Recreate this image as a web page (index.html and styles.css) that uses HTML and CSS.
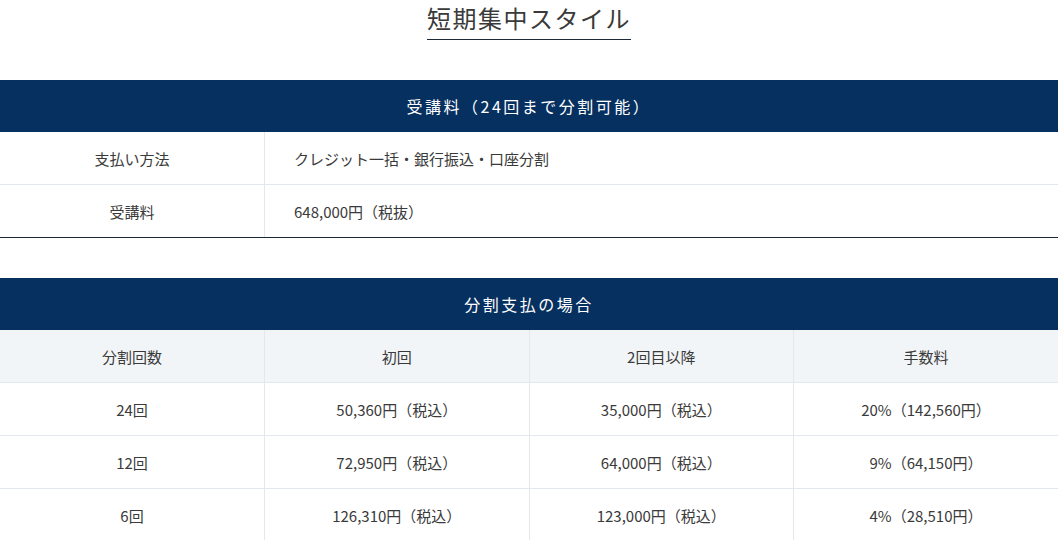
FILE: index.html
```html
<!DOCTYPE html>
<html lang="ja">

<head>
    <meta charset="UTF-8">
    <meta name="viewport" content="width=device-width, initial-scale=1.0">
    <title>短期集中スタイル</title>
    <link rel="stylesheet" href="styles.css">
</head>

<body>

    <div class="plan">
        <div class="plan-title">
            <h2>短期集中スタイル</h2>
        </div>

        <table class="price-table">
            <colgroup>
                <col class="col-label">
                <col>
            </colgroup>
            <thead>
                <tr>
                    <th colspan="2" class="band">受講料（24回まで分割可能）</th>
                </tr>
            </thead>
            <tbody>
                <tr>
                    <th class="label">支払い方法</th>
                    <td class="value">クレジット一括・銀行振込・口座分割</td>
                </tr>
                <tr class="last">
                    <th class="label">受講料</th>
                    <td class="value">648,000円（税抜）</td>
                </tr>
            </tbody>
        </table>

        <table class="price-table split-table">
            <thead>
                <tr>
                    <th colspan="4" class="band">分割支払の場合</th>
                </tr>
                <tr class="sub-head">
                    <th>分割回数</th>
                    <th>初回</th>
                    <th>2回目以降</th>
                    <th>手数料</th>
                </tr>
            </thead>
            <tbody>
                <tr>
                    <td>24回</td>
                    <td>50,360円（税込）</td>
                    <td>35,000円（税込）</td>
                    <td>20%（142,560円）</td>
                </tr>
                <tr>
                    <td>12回</td>
                    <td>72,950円（税込）</td>
                    <td>64,000円（税込）</td>
                    <td>9%（64,150円）</td>
                </tr>
                <tr>
                    <td>6回</td>
                    <td>126,310円（税込）</td>
                    <td>123,000円（税込）</td>
                    <td>4%（28,510円）</td>
                </tr>
            </tbody>
        </table>
    </div>

</body>

</html>
```

FILE: styles.css
```css
body {
    font-family: 'Noto Sans CJK JP', 'Noto Sans', sans-serif;
    margin: 0;
    padding: 0;
    background-color: #fff;
    color: #3a3a3a;
}

.plan-title {
    text-align: center;
}

.plan-title h2 {
    display: inline-block;
    margin: 0;
    padding: 0 0 3px;
    font-size: 24px;
    font-weight: normal;
    line-height: 36px;
    letter-spacing: 1.5px;
    color: #3a3a3a;
    border-bottom: 1px solid #1d2a35;
}

.price-table {
    width: 100%;
    margin-top: 40px;
    border-collapse: collapse;
    table-layout: fixed;
    font-size: 15px;
}

.price-table .col-label {
    width: 25%;
}

.price-table th,
.price-table td {
    height: 52px;
    padding: 0;
    font-weight: normal;
    border-bottom: 1px solid #e3e8ee;
}

.price-table .band {
    height: 52px;
    background-color: #06305f;
    color: #fff;
    font-size: 16px;
    letter-spacing: 2.5px;
    text-align: center;
    border-bottom: none;
}

.price-table .label {
    text-align: center;
    border-right: 1px solid #e3e8ee;
}

.price-table .value {
    text-align: left;
    padding-left: 29px;
}

.price-table tr.last th,
.price-table tr.last td {
    border-bottom: 1px solid #1d2a35;
}

.split-table td,
.split-table .sub-head th {
    text-align: center;
    border-right: 1px solid #e3e8ee;
}

.split-table td:last-child,
.split-table .sub-head th:last-child {
    border-right: none;
}

.split-table .sub-head th {
    background-color: #f2f5f8;
}
```
